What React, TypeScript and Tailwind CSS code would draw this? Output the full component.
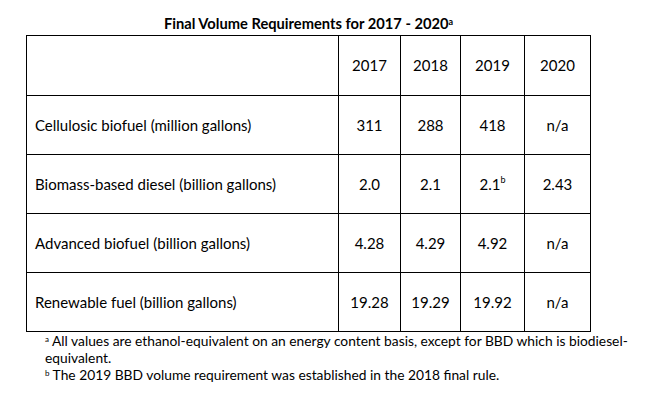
import React from 'react'

const rows: { label: string; values: React.ReactNode[] }[] = [
  { label: 'Cellulosic biofuel (million gallons)', values: ['311', '288', '418', 'n/a'] },
  {
    label: 'Biomass-based diesel (billion gallons)',
    values: [
      '2.0',
      '2.1',
      <>
        2.1<sup className="text-[9px]">b</sup>
      </>,
      '2.43',
    ],
  },
  { label: 'Advanced biofuel (billion gallons)', values: ['4.28', '4.29', '4.92', 'n/a'] },
  { label: 'Renewable fuel (billion gallons)', values: ['19.28', '19.29', '19.92', 'n/a'] },
]

const years = ['2017', '2018', '2019', '2020']

export default function App() {
  return (
    <div className="w-[648px] h-[412px] bg-white text-black pt-[15px] pl-[26px] font-['Lato',sans-serif]">
      <div className="w-[565px]">
        {/* Title */}
        <h1 className="text-center text-[14.7px] leading-[17px] font-bold mb-[3px]">
          Final Volume Requirements for 2017 - 2020<sup className="text-[9px] font-bold">a</sup>
        </h1>

        {/* Table */}
        <div className="grid grid-cols-[312px_62px_60px_64px_66px] border-r border-b border-black text-[15px]">
          <div className="h-[60px] border-l border-t border-black" />
          {years.map((y) => (
            <div key={y} className="h-[60px] border-l border-t border-black flex items-center justify-center">
              {y}
            </div>
          ))}

          {rows.map((row) => (
            <React.Fragment key={row.label}>
              <div className="h-[59px] border-l border-t border-black flex items-center pl-2">
                {row.label}
              </div>
              {row.values.map((v, i) => (
                <div key={i} className="h-[59px] border-l border-t border-black flex items-center justify-center">
                  {v}
                </div>
              ))}
            </React.Fragment>
          ))}
        </div>
      </div>

      {/* Footnotes */}
      <div className="pl-[19px] text-[13.8px] leading-[17px] whitespace-nowrap">
        <p>
          <sup className="text-[8px]">a</sup> All values are ethanol-equivalent on an energy content basis, except for BBD
          which is biodiesel-
          <br />
          equivalent.
        </p>
        <p>
          <sup className="text-[8px]">b</sup> The 2019 BBD volume requirement was established in the 2018 final rule.
        </p>
      </div>
    </div>
  )
}
